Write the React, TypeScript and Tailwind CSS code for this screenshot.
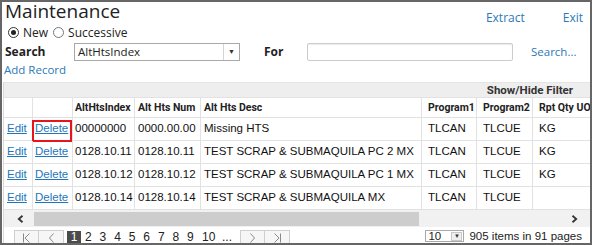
import { ReactNode } from "react";

const os = "font-['Open_Sans',sans-serif]";
const arial = "font-['Liberation_Sans',Arial,sans-serif]";
const head = "font-['Roboto',sans-serif] font-bold";

const cols = "grid grid-cols-[29px_40px_62px_66px_221px_55px_56px_80px]";

const rows = [
  ["00000000", "0000.00.00", "Missing HTS", "TLCAN", "TLCUE", "KG"],
  ["0128.10.11", "0128.10.11", "TEST SCRAP & SUBMAQUILA PC 2 MX", "TLCAN", "TLCUE", "KG"],
  ["0128.10.12", "0128.10.12", "TEST SCRAP & SUBMAQUILA PC 1 MX", "TLCAN", "TLCUE", "KG"],
  ["0128.10.14", "0128.10.14", "TEST SCRAP & SUBMAQUILA MX", "TLCAN", "TLCUE", ""],
];

const pad = ["pl-[3px]", "pl-[2px]", "pl-[2px]", "pl-[3px]", "pl-[3px]", "pl-[6px]", "pl-[6px]", "pl-[6px]"];

const Cell = ({ i, children }: { i: number; children?: ReactNode }) => (
  <div className={`relative flex items-center overflow-hidden whitespace-nowrap border-r border-[#e2e2e2] ${pad[i]}`}>
    {children}
  </div>
);

const Radio = ({ checked, label }: { checked?: boolean; label: string }) => (
  <label className="flex items-center gap-[4px]">
    <span className={`flex h-[11px] w-[11px] items-center justify-center rounded-full border ${checked ? "border-[#333]" : "border-[#777]"} bg-white`}>
      {checked && <span className="h-[5px] w-[5px] rounded-full bg-[#222]" />}
    </span>
    <span className={`${os} text-[12px] leading-[15px] text-[#222]`}>{label}</span>
  </label>
);

const PagerBtn = ({ children }: { children: ReactNode }) => (
  <div className="flex h-[14px] w-[24px] items-center justify-center border-r border-[#cfcfcf] last:border-r-0 text-[#8a8a8a]">
    {children}
  </div>
);

export default function App() {
  return (
    <div className="flex h-[245px] w-[592px] flex-col overflow-hidden border-2 border-[#666] bg-white">
      {/* title */}
      <div className="flex h-[23px] shrink-0 items-start justify-between">
        <h1 className={`${os} ml-[3px] text-[19px] leading-[18px] text-[#222]`}>Maintenance</h1>
        <div className={`${os} mt-[8px] mr-[7px] flex gap-[38px] text-[12px] leading-[16px] text-[#2a7ab8]`}>
          <a>Extract</a>
          <a>Exit</a>
        </div>
      </div>

      <div className="flex h-[15px] shrink-0 items-center gap-[5px] pl-[6px]">
        <Radio checked label="New" />
        <Radio label="Successive" />
      </div>

      {/* search */}
      <div className="flex h-[24px] shrink-0 items-center">
        <span className={`${os} ml-[3px] w-[69px] text-[12px] font-bold text-[#222]`}>Search</span>
        <div className="flex h-[18px] w-[166px] items-center border border-[#a9a9a9] bg-white">
          <span className={`${os} flex-1 pl-[3px] text-[11.5px] leading-[16px] text-[#222]`}>AltHtsIndex</span>
          <span className="flex h-full w-[16px] items-center justify-center border-l border-[#d4d4d4] text-[7px] text-[#333]">▼</span>
        </div>
        <span className={`${os} ml-[24px] w-[43px] text-[12px] font-bold text-[#222]`}>For</span>
        <div className="h-[18px] w-[206px] rounded-[2px] border border-[#cccccc] bg-white shadow-[inset_0_1px_1px_rgba(0,0,0,0.08)]" />
        <a className={`${os} ml-[18px] text-[11.5px] text-[#2a7ab8]`}>Search...</a>
      </div>

      <div className="flex h-[18px] shrink-0 items-start">
        <a className={`${os} ml-[2px] text-[11.5px] leading-[12px] text-[#2a7ab8]`}>Add Record</a>
      </div>

      {/* grid */}
      <div className="ml-[1px] flex min-h-0 flex-1 flex-col overflow-hidden border-l border-[#d9d9d9]">
        <div className="flex h-[15px] shrink-0 items-center justify-end border-t border-[#e4e4e4] bg-[#eeeeee] pr-[17px]">
          <span className={`${head} text-[11.5px] leading-[14px] text-[#333]`}>Show/Hide Filter</span>
        </div>
        <div className={`${cols} h-[21px] shrink-0 border-y border-[#e2e2e2] ${head} text-[10.5px] text-[#222]`}>
          <Cell i={0} />
          <Cell i={1} />
          <Cell i={2}>AltHtsIndex</Cell>
          <Cell i={3}>Alt Hts Num</Cell>
          <Cell i={4}>Alt Hts Desc</Cell>
          <Cell i={5}>Program1</Cell>
          <Cell i={6}>Program2</Cell>
          <Cell i={7}>Rpt Qty UOM</Cell>
        </div>
        {rows.map((r, n) => (
          <div key={n} className={`${cols} h-[23px] shrink-0 border-b border-[#e2e2e2] ${arial} text-[11.5px] text-[#111]`}>
            <Cell i={0}>
              <a className="text-[#1f76bb] underline">Edit</a>
            </Cell>
            <div className={`relative flex items-center whitespace-nowrap border-r border-[#e2e2e2] ${pad[1]}`}>
              <a className="text-[#1f76bb] underline">Delete</a>
              {n === 0 && <span className="absolute left-[-1px] top-[2px] h-[22px] w-[40px] border-2 border-[#e8141b]" />}
            </div>
            {r.map((v, k) => (
              <Cell key={k} i={k + 2}>{v}</Cell>
            ))}
          </div>
        ))}

        {/* scrollbar */}
        <div className="flex h-[17px] shrink-0 items-center bg-[#f1f1f1]">
          <div className="flex w-[30px] justify-center pl-[2px] text-[#333]">
            <svg width="7" height="8" viewBox="0 0 7 8"><path d="M5.5 0.8 L1.8 4 L5.5 7.2" fill="none" stroke="currentColor" strokeWidth="1.8" /></svg>
          </div>
          <div className="h-[14px] w-[385px] bg-[#cdcdcd]" />
          <div className="flex flex-1 justify-end pr-[12px] text-[#333]">
            <svg width="7" height="8" viewBox="0 0 7 8"><path d="M1.5 0.8 L5.2 4 L1.5 7.2" fill="none" stroke="currentColor" strokeWidth="1.8" /></svg>
          </div>
        </div>

        {/* pager */}
        <div className={`flex h-[17px] shrink-0 items-start pt-[3px] ${arial} text-[12px] leading-[12px] text-[#222]`}>
          <div className="ml-[10px] flex border border-[#cfcfcf] bg-[#f6f6f6]">
            <PagerBtn>
              <svg width="9" height="10" viewBox="0 0 9 10"><path d="M1.5 0.5 V9.5 M7.5 0.5 L3 5 L7.5 9.5" fill="none" stroke="currentColor" strokeWidth="1" /></svg>
            </PagerBtn>
            <PagerBtn>
              <svg width="7" height="10" viewBox="0 0 7 10"><path d="M5.5 0.5 L1.5 5 L5.5 9.5" fill="none" stroke="currentColor" strokeWidth="1" /></svg>
            </PagerBtn>
          </div>
          <div className="ml-[3px] mt-[1px] flex items-center">
            <span className="flex h-[12px] w-[14px] items-center justify-center bg-[#4b4b4b] text-white">1</span>
            {["2", "3", "4", "5", "6", "7", "8", "9", "10", "..."].map((p) => (
              <span key={p} className={`${p === "10" ? "w-[22px]" : "w-[14.6px]"} text-center`}>{p}</span>
            ))}
          </div>
          <div className="ml-[6px] flex border border-[#cfcfcf] bg-[#f6f6f6]">
            <PagerBtn>
              <svg width="7" height="10" viewBox="0 0 7 10"><path d="M1.5 0.5 L5.5 5 L1.5 9.5" fill="none" stroke="currentColor" strokeWidth="1" /></svg>
            </PagerBtn>
            <PagerBtn>
              <svg width="9" height="10" viewBox="0 0 9 10"><path d="M1.5 0.5 L6 5 L1.5 9.5 M7.5 0.5 V9.5" fill="none" stroke="currentColor" strokeWidth="1" /></svg>
            </PagerBtn>
          </div>
          <div className="ml-auto mr-[8px] flex items-center gap-[5px] text-[11.5px] leading-[12px]">
            <div className="flex h-[12px] w-[39px] items-center border border-[#a9a9a9] bg-white">
              <span className="flex-1 pl-[2px] leading-[10px]">10</span>
              <span className="mr-[1px] flex h-[9px] w-[11px] items-center justify-center border border-[#c8c8c8] bg-[#eee] text-[6px] text-[#333]">▼</span>
            </div>
            <span>905 items in 91 pages</span>
          </div>
        </div>
      </div>
    </div>
  );
}
